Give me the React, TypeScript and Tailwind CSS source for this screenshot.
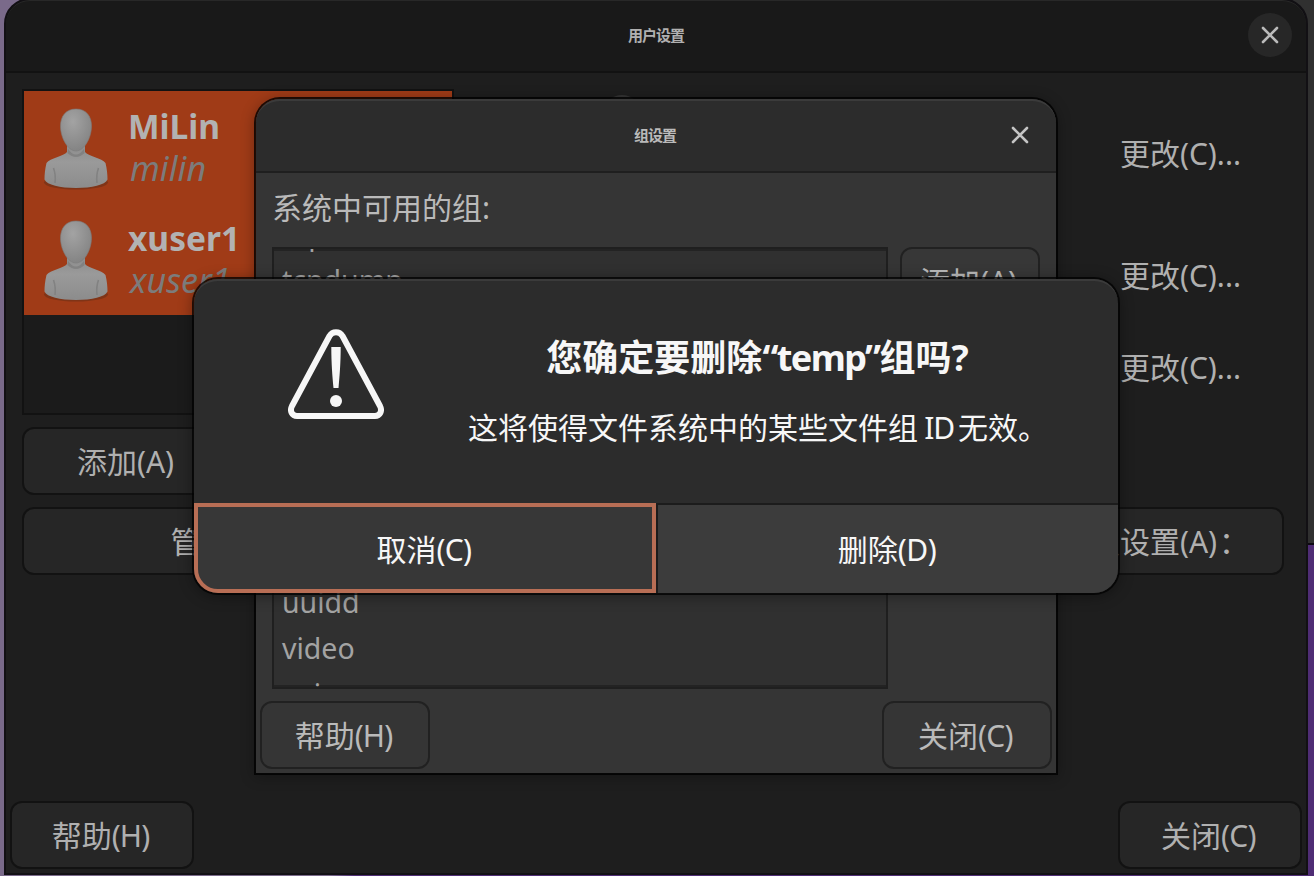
import React from "react";

const cjk = "font-['Noto_Sans','Noto_Sans_CJK_SC',sans-serif]";

function Btn({ className, children }: { className: string; children: React.ReactNode }) {
  return (
    <button className={`box-border flex h-[68px] shrink-0 items-center justify-center rounded-xl border-2 pt-0.5 pr-[3px] text-[30px] leading-none whitespace-nowrap ${className}`}>
      {children}
    </button>
  );
}

function Latin({ children, className = "tracking-[-0.7px]" }: { children: React.ReactNode; className?: string }) {
  return <span className={className}>{children}</span>;
}

function CloseIcon() {
  return (
    <svg width="18" height="18" viewBox="0 0 18 18" fill="none" stroke="currentColor" strokeWidth="2.6" strokeLinecap="round">
      <path d="M2 2L16 16M16 2L2 16" />
    </svg>
  );
}

function Avatar({ id }: { id: string }) {
  return (
    <svg width="68" height="86" viewBox="0 0 68 86" className="shrink-0">
      <defs>
        <radialGradient id={`${id}h`} cx="0.4" cy="0.3" r="0.75">
          <stop offset="0" stopColor="#a3a3a3" />
          <stop offset="1" stopColor="#828282" />
        </radialGradient>
        <linearGradient id={`${id}b`} x1="0" y1="0" x2="0" y2="1">
          <stop offset="0" stopColor="#8b8b8b" />
          <stop offset="0.4" stopColor="#9a9a9a" />
          <stop offset="1" stopColor="#8c8c8c" />
        </linearGradient>
      </defs>
      <ellipse cx="34" cy="75.500" rx="32" ry="7" fill="#6b3018" opacity="0.6" />
      <path d="M25 38V45C22 49 8 51 4.500 56C3 62 2.500 68 2.500 72.500C5 78 18 81 34 81C50 81 63 78 65.500 72.500C65.500 68 65 62 63.500 56C60 51 46 49 43 45V38Z" fill={`url(#${id}b)`} />
      <path d="M13 76Q14 68 11.500 61M55 76Q54 68 56.500 61" fill="none" stroke="#828282" strokeWidth="1.6" />
      <path d="M26 42Q34 53 42 42L42.500 46Q34 54 25.500 46Z" fill="#777" opacity="0.6" />
      <path d="M34 2C44 2 49.500 9 49.500 19C49.500 31 42 44 34 44C26 44 18.500 31 18.500 19C18.500 9 24 2 34 2Z" fill={`url(#${id}h)`} stroke="#7c7c7c" strokeWidth="0.6" />
    </svg>
  );
}

function UserRow({ name, login, id }: { name: string; login: string; id: string }) {
  return (
    <div className="flex h-28 items-start bg-[#a03b17] pt-4 pl-[18px]">
      <Avatar id={id} />
      <div className="flex flex-col pl-[18px] font-['Noto_Sans',sans-serif] whitespace-nowrap">
        <span className="-mt-px h-[42px] text-[33.500px] leading-[40px] font-bold text-[#b2b2b2]">{name}</span>
        <span className="h-[42px] pl-0.5 text-[34px] leading-[40px] tracking-[0.1px] text-[#7c7c7c] italic">{login}</span>
      </div>
    </div>
  );
}

function ChangeLabel({ className }: { className: string }) {
  return <div className={`mr-[43px] flex items-center pt-1 text-[30px] whitespace-nowrap ${className}`}>更改(C)...</div>;
}

function UserWindow() {
  return (
    <section className="absolute -top-0.5 left-1 box-border flex h-[877px] w-[1304px] flex-col overflow-hidden rounded-t-[26px] border-2 border-[#121014] bg-[#1e1e1e] text-[#b0b0b0]">
      <header className="relative box-border flex h-[73px] shrink-0 items-center justify-center rounded-t-[24px] border-t border-b-2 border-t-[#282828] border-b-[#121212] bg-[#191919] text-[15px] font-bold">
        <span className="-mt-0.5 tracking-[-1px]">用户设置</span>
        <button className="absolute top-3 right-3.5 flex size-11 items-center justify-center rounded-full bg-[#272727] text-[#bababa]">
          <CloseIcon />
        </button>
      </header>
      <div className="flex flex-1 gap-6 pt-4 pr-[22px] pl-4">
        <div className="flex w-[432px] shrink-0 flex-col gap-3">
          <div className="box-border h-[326px] border-2 border-[#121212] bg-[#1b1b1b]">
            <UserRow id="a" name="MiLin" login="milin" />
            <UserRow id="b" name="xuser1" login="xuser1" />
          </div>
          <div className="flex gap-3">
            <Btn className="w-[210px] border-[#121212] bg-[#262626]">添加(A)</Btn>
            <Btn className="w-[210px] border-[#121212] bg-[#262626]">删除</Btn>
          </div>
          <Btn className="border-[#121212] bg-[#262626] pl-[3px]">管理组(M)</Btn>
        </div>
        <div className="flex flex-1 flex-col items-end">
          <div className="flex h-[124px] w-full items-center justify-between pl-[125px]">
            <span className="mt-[6px] size-[38px] self-start rounded-full bg-[#343434]" />
            <ChangeLabel className="" />
          </div>
          <ChangeLabel className="h-[120px]" />
          <ChangeLabel className="h-16" />
          <Btn className="mt-[110px] w-[256px] border-[#121212] bg-[#262626]">高级设置(A)<span className="ml-0.5">：</span></Btn>
        </div>
      </div>
      <footer className="flex shrink-0 justify-between px-1 pb-1">
        <Btn className="w-[184px] border-[#121212] bg-[#262626]">帮助<Latin className="tracking-[-0.9px]">(H)</Latin></Btn>
        <Btn className="w-[184px] border-[#121212] bg-[#262626]">关闭<Latin>(C)</Latin></Btn>
      </footer>
    </section>
  );
}

const groups = ["tape", "tcpdump", "temp", "tss", "tty", "users", "utmp", "uucp", "uuidd", "video", "voice"];

function GroupWindow() {
  return (
    <section className="absolute top-[97px] left-[254px] box-border flex h-[678px] w-[804px] flex-col rounded-t-[26px] border-2 border-black/80 bg-[#353535] bg-clip-padding text-[#bababa] shadow-[0_2px_14px_rgba(0,0,0,0.3)]">
      <header className="relative box-border flex h-[74px] shrink-0 items-center justify-center rounded-t-[24px] border-t-2 border-b-2 border-t-[#3b3b3b] border-b-[#1f1f1f] bg-[#2c2c2c] text-[15px] font-bold">
        <span className="pr-0.5 pb-px tracking-[-1px]">组设置</span>
        <button className="absolute top-0 right-3.5 flex h-[68px] w-11 items-center justify-center text-[#c4c4c4]">
          <CloseIcon />
        </button>
      </header>
      <div className="flex h-[74px] shrink-0 items-center pb-1.5 pl-4 text-[30px]">系统中可用的组:</div>
      <div className="flex shrink-0 gap-3 pl-4">
        <div className="box-border h-[442px] w-[616px] overflow-hidden border-2 border-[#1f1f1f] bg-[#303030] shadow-[inset_0_2px_0_#232323,inset_0_-2px_0_#232323]">
          <div className="-mt-[38px] flex flex-col pl-2 text-[28.500px] text-[#a3a3a3]">
            {groups.map((g) => (
              <span key={g} className="h-[46px] leading-[46px]">{g}</span>
            ))}
          </div>
        </div>
        <Btn className="w-[140px] border-[#212121] bg-[#373737]">添加(A)</Btn>
      </div>
      <footer className="mt-3 flex justify-between px-1">
        <Btn className="w-[170px] border-[#212121] bg-[#353535]">帮助<Latin className="tracking-[-0.9px]">(H)</Latin></Btn>
        <Btn className="w-[170px] border-[#212121] bg-[#353535]">关闭<Latin>(C)</Latin></Btn>
      </footer>
    </section>
  );
}

function ConfirmDialog() {
  return (
    <section className="absolute top-[277px] left-[192px] box-border flex h-[318px] w-[928px] flex-col rounded-[26px] border-2 border-black/75 bg-[#2c2c2c] bg-clip-padding text-[#f7f7f7] shadow-[0_2px_14px_rgba(0,0,0,0.35)]">
      <div className="box-border flex h-56 shrink-0 rounded-t-[24px] border-t-2 border-[#3b3b3b] pt-12 pl-[94px]">
        <svg width="96" height="92" viewBox="0 0 96 92" fill="none" className="shrink-0">
          <path d="M41.500 7C44.500 2 51.500 2 54.500 7L92 77C94.500 82 92 87 87 87H9C4 87 1.500 82 4 77Z" stroke="#f7f7f7" strokeWidth="6" strokeLinejoin="round" />
          <path d="M43.300 18H52.700C52.700 35 51.500 48 50.500 59H45.500C44.500 48 43.300 35 43.300 18Z" fill="#f7f7f7" />
          <circle cx="48" cy="72" r="6" fill="#f7f7f7" />
        </svg>
        <div className="mt-px ml-[84px] flex w-[580px] flex-col items-center">
          <h1 className="pr-px text-[36px] leading-[56px] font-bold whitespace-nowrap">
            您确定要删除<span className="tracking-[-1.6px]">“temp”</span>组吗?
          </h1>
          <p className="mt-4 text-[30px] leading-[52px] whitespace-nowrap">
            这将使得文件系统中的某些文件组<span className="-mr-0.5 tracking-[-1.4px]"> ID </span>无效。
          </p>
        </div>
      </div>
      <div className="flex flex-1 gap-0.5 rounded-b-[24px] bg-[#1c1c1c] text-[30px]">
        <button className="box-border flex w-[462px] items-center justify-center rounded-bl-[24px] border-4 border-[#b86e55] bg-[#373737] pt-0.5 pr-0.5">取消<Latin>(C)</Latin></button>
        <button className="box-border flex flex-1 items-center justify-center rounded-br-[24px] border-t-2 border-[#1c1c1c] bg-[#3c3c3c] pr-0.5">删除<Latin className="tracking-[-0.5px]">(D)</Latin></button>
      </div>
    </section>
  );
}

export default function App() {
  return (
    <main lang="zh-CN" className={`relative h-[876px] w-[1314px] overflow-hidden bg-linear-to-r from-[#7a6a8a] from-25% to-[#4f2d75] to-27% ${cjk}`}>
      <div className="absolute top-0 right-0 h-[545px] w-[60px] rounded-bl-[24px] border-b-2 border-[#0d0912] bg-[#303030]" />
      <UserWindow />
      <GroupWindow />
      <ConfirmDialog />
    </main>
  );
}
